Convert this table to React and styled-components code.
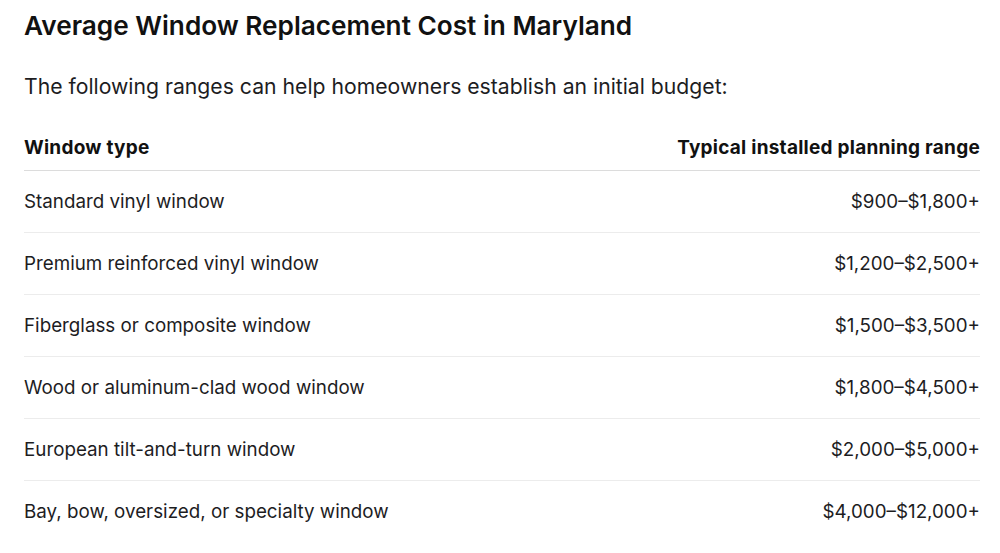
import React from "react";
import styled, { createGlobalStyle } from "styled-components";

const Global = createGlobalStyle`
  html, body { margin: 0; padding: 0; background: #ffffff; }
  body { font-family: Inter, "Noto Sans", "Liberation Sans", sans-serif; color: #1d1d1f; -webkit-font-smoothing: antialiased; }
`;

const Page = styled.main`
  padding: 0 20px 0 24px;
`;

const Title = styled.h2`
  margin: 10px 0 0;
  font-size: 26.2px;
  line-height: 31px;
  font-weight: 600;
  color: #111111;
`;

const Intro = styled.p`
  margin: 33px 0 0;
  font-size: 21.2px;
  line-height: 25px;
  font-weight: 400;
  color: #1d1d1f;
`;

const Table = styled.table`
  margin-top: 27px;
  width: 100%;
  border-collapse: collapse;
  font-size: 18.8px;
`;

const HeadCell = styled.th`
  padding: 11px 0;
  line-height: 22px;
  font-size: 19px;
  letter-spacing: 0.25px;
  font-weight: 700;
  color: #111111;
  text-align: ${(p) => (p.$right ? "right" : "left")};
  border-bottom: 1px solid #dcdcdc;
`;

const Row = styled.tr`
  border-bottom: ${(p) => (p.$last ? "none" : "1px solid #ececec")};
`;

const Cell = styled.td`
  height: 61px;
  padding: 0;
  line-height: 22px;
  vertical-align: middle;
  color: #1d1d1f;
  text-align: ${(p) => (p.$right ? "right" : "left")};
`;

const rows = [
  ["Standard vinyl window", "$900–$1,800+"],
  ["Premium reinforced vinyl window", "$1,200–$2,500+"],
  ["Fiberglass or composite window", "$1,500–$3,500+"],
  ["Wood or aluminum-clad wood window", "$1,800–$4,500+"],
  ["European tilt-and-turn window", "$2,000–$5,000+"],
  ["Bay, bow, oversized, or specialty window", "$4,000–$12,000+"],
];

export default function App() {
  return (
    <Page>
      <Global />
      <Title>Average Window Replacement Cost in Maryland</Title>
      <Intro>The following ranges can help homeowners establish an initial budget:</Intro>
      <Table>
        <thead>
          <tr>
            <HeadCell>Window type</HeadCell>
            <HeadCell $right>Typical installed planning range</HeadCell>
          </tr>
        </thead>
        <tbody>
          {rows.map(([type, range], i) => (
            <Row key={type} $last={i === rows.length - 1}>
              <Cell>{type}</Cell>
              <Cell $right>{range}</Cell>
            </Row>
          ))}
        </tbody>
      </Table>
    </Page>
  );
}
